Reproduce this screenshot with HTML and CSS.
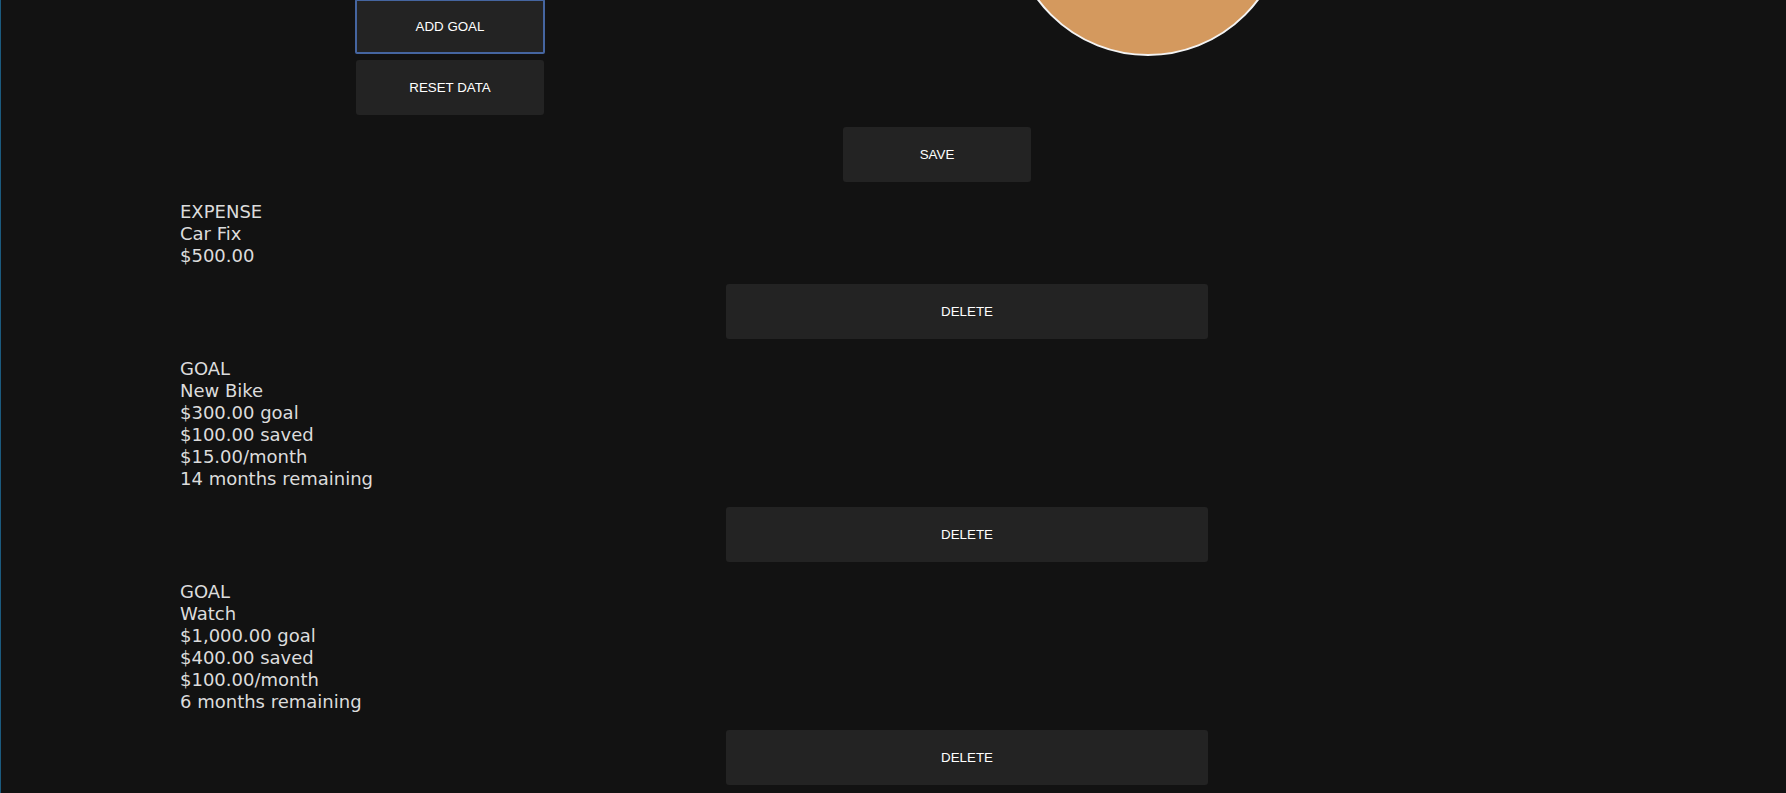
FILE: index.html
```html
<!DOCTYPE html>
<html lang="en">
<head>
    <meta charset="UTF-8">
    <meta name="viewport" content="width=device-width, initial-scale=1.0">
    <title>Budget Goals</title>
    <link rel="stylesheet" href="styles.css">
</head>
<body>
    <div class="page">
        <div class="top-row">
            <div class="form-buttons">
                <button class="btn btn-focus">ADD GOAL</button>
                <button class="btn">RESET DATA</button>
            </div>
            <div class="pie"></div>
        </div>
        <div class="save-row">
            <button class="btn">SAVE</button>
        </div>
        <div class="items">
            <div class="item">
                <div class="item-text">
                    <div>EXPENSE</div>
                    <div>Car Fix</div>
                    <div>$500.00</div>
                </div>
                <button class="btn btn-delete">DELETE</button>
            </div>
            <div class="item">
                <div class="item-text">
                    <div>GOAL</div>
                    <div>New Bike</div>
                    <div>$300.00 goal</div>
                    <div>$100.00 saved</div>
                    <div>$15.00/month</div>
                    <div>14 months remaining</div>
                </div>
                <button class="btn btn-delete">DELETE</button>
            </div>
            <div class="item">
                <div class="item-text">
                    <div>GOAL</div>
                    <div>Watch</div>
                    <div>$1,000.00 goal</div>
                    <div>$400.00 saved</div>
                    <div>$100.00/month</div>
                    <div>6 months remaining</div>
                </div>
                <button class="btn btn-delete">DELETE</button>
            </div>
        </div>
    </div>
</body>
</html>
```

FILE: styles.css
```css
body {
    margin: 0;
    background-color: #121212;
    border-left: 1px solid #1b5a7e;
    font-family: "DejaVu Sans", sans-serif;
    color: #dcdcdc;
    min-height: 100vh;
    overflow: hidden;
}
.page {
    margin-top: -220px;
}
.top-row {
    display: flex;
    align-items: flex-start;
    padding-left: 354px;
}
.form-buttons {
    display: flex;
    flex-direction: column;
    gap: 6px;
    margin-top: 219px;
    width: 190px;
}
.btn {
    background-color: #232323;
    color: white;
    border: none;
    border-radius: 3px;
    height: 55px;
    font-family: "Liberation Sans", Arial, sans-serif;
    font-size: 13.333px;
    cursor: pointer;
}
.btn-focus {
    border: 2px solid #4565a0;
    border-radius: 2px;
}
.form-buttons .btn:not(.btn-focus) {
    width: 188px;
    margin-left: 1px;
}
.pie {
    width: 276px;
    height: 276px;
    box-sizing: border-box;
    border-radius: 50%;
    border: 2px solid #f4f4f4;
    background-color: #d4995e;
    margin-left: 465px;
}
.save-row {
    padding-left: 842px;
    margin-top: 12px;
}
.save-row .btn {
    width: 188px;
}
.items {
    margin: 19px 0 0 179px;
    width: 1574px;
}
.item {
    display: flex;
    flex-direction: column;
    margin-bottom: 19px;
}
.item-text {
    font-size: 18px;
    line-height: 22px;
}
.btn-delete {
    width: 482px;
    margin: 17px auto 0;
}
```
